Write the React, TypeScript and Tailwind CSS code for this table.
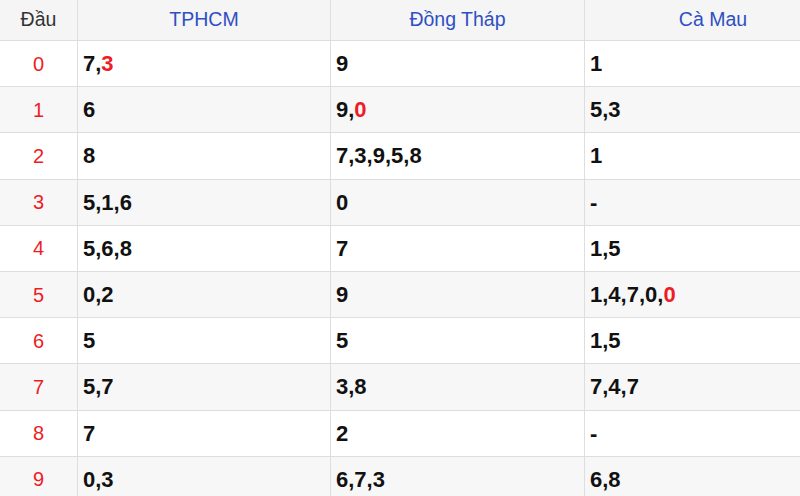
const rows: { head: string; cols: [string, string?][] }[] = [
  { head: "0", cols: [["7,", "3"], ["9"], ["1"]] },
  { head: "1", cols: [["6"], ["9,", "0"], ["5,3"]] },
  { head: "2", cols: [["8"], ["7,3,9,5,8"], ["1"]] },
  { head: "3", cols: [["5,1,6"], ["0"], ["-"]] },
  { head: "4", cols: [["5,6,8"], ["7"], ["1,5"]] },
  { head: "5", cols: [["0,2"], ["9"], ["1,4,7,0,", "0"]] },
  { head: "6", cols: [["5"], ["5"], ["1,5"]] },
  { head: "7", cols: [["5,7"], ["3,8"], ["7,4,7"]] },
  { head: "8", cols: [["7"], ["2"], ["-"]] },
  { head: "9", cols: [["0,3"], ["6,7,3"], ["6,8"]] },
];

const provinces = ["TPHCM", "Đồng Tháp", "Cà Mau"];

export default function App() {
  return (
    <div className="w-[800px] h-[496px] overflow-hidden bg-white font-['Liberation_Sans',Arial,sans-serif]">
      <div className="w-[842px] grid grid-cols-[78px_253px_254px_257px]">
        {/* header */}
        <div className="h-[41px] flex items-center justify-center bg-[#f5f5f5] border-b border-r border-[#dedede] text-[19.5px] text-[#333]">
          Đầu
        </div>
        {provinces.map((p) => (
          <div
            key={p}
            className="h-[41px] flex items-center justify-center bg-[#f5f5f5] border-b border-r border-[#dedede] text-[19.5px] text-[#2f4fc4]"
          >
            {p}
          </div>
        ))}

        {rows.map((r, i) => {
          const bg = i % 2 === 1 ? "bg-[#f7f7f7]" : "bg-white";
          return [
            <div
              key={r.head}
              className={`h-[46.2px] flex items-center justify-center border-b border-r border-[#dedede] text-[20px] text-[#ee1c25] ${bg}`}
            >
              {r.head}
            </div>,
            ...r.cols.map(([txt, red], j) => (
              <div
                key={r.head + "-" + j}
                className={`h-[46.2px] flex items-center pl-[5px] border-b border-r border-[#dedede] text-[22px] font-bold text-[#111] ${bg}`}
              >
                {txt}
                {red && <span className="text-[#ee1c25]">{red}</span>}
              </div>
            )),
          ];
        })}
      </div>
    </div>
  );
}
